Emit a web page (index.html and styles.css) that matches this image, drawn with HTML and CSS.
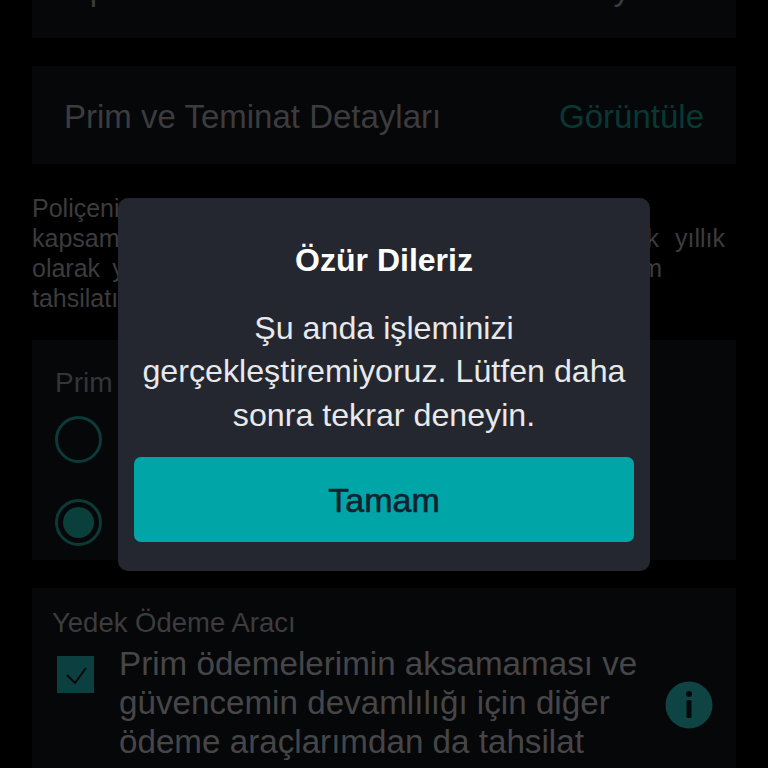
FILE: index.html
```html
<!DOCTYPE html>
<html lang="tr">
<head>
<meta charset="utf-8">
<title>Özür Dileriz</title>
<link rel="stylesheet" href="styles.css">
</head>
<body>
<main class="page">
  <section class="card card-top"><p class="top-text"><span>Ops. Teminat Tutarı</span><span>12 Ay</span></p></section>
  <section class="card card-detail">
    <span class="detail-title">Prim ve Teminat Detayları</span>
    <span class="detail-link">Görüntüle</span>
  </section>
  <p class="note">
    <span class="note-line">Poliçenizin prim ödemesi seçtiğiniz ödeme aracından</span>
    <span class="note-line note-wide">kapsamında primleri tahsil edilmekte olup toplanarak yıllık</span>
    <span class="note-line note-mid">olarak yenilenir ve ödeme planı üzerinden alınan prim</span>
    <span class="note-line">tahsilatı yapılır.</span>
  </p>
  <section class="card card-plan">
    <h2 class="plan-title">Prim Ödeme Planı</h2>
    <div class="plan-row"><span class="radio"></span><span class="plan-label">Yıllık</span></div>
    <div class="plan-row"><span class="radio radio-on"></span><span class="plan-label">Aylık</span></div>
  </section>
  <section class="card card-backup">
    <h2 class="backup-title">Yedek Ödeme Aracı</h2>
    <div class="backup-row">
      <span class="check">
        <svg viewBox="0 0 37 37" width="37" height="37" aria-hidden="true"><path d="M10 19l8 8L29 12" fill="none" stroke="#05090b" stroke-width="2"/></svg>
      </span>
      <p class="backup-text">Prim ödemelerimin aksamaması ve güvencemin devamlılığı için diğer ödeme araçlarımdan da tahsilat yapılmasını istiyorum.</p>
      <span class="info">
        <svg viewBox="0 0 48 48" width="48" height="48" aria-hidden="true"><circle cx="24" cy="24" r="23.5" fill="#0e4444"/><circle cx="24" cy="13" r="3" fill="#05090b"/><rect x="21.5" y="19" width="5" height="18" rx="1.5" fill="#05090b"/></svg>
      </span>
    </div>
  </section>
</main>
<div class="overlay">
  <div class="modal" role="dialog">
    <h1 class="modal-title">Özür Dileriz</h1>
    <p class="modal-text">Şu anda işleminizi gerçekleştiremiyoruz. Lütfen daha sonra tekrar deneyin.</p>
    <button class="modal-btn" type="button">Tamam</button>
  </div>
</div>
</body>
</html>
```
FILE: styles.css
```css
* { box-sizing: border-box; }
html, body { margin: 0; padding: 0; height: 768px; overflow: hidden; background: #000; }
body { font-family: "Liberation Sans", Arial, sans-serif; color: #3c3c3e; }
h1, h2, p { margin: 0; font-weight: 400; }
.page { display: flex; flex-direction: column; padding: 0 32px; height: 768px; overflow: hidden; }
.card { background: #060709; flex: none; }
.card-top { height: 38px; overflow: hidden; padding: 0 106px 0 32px; }
.top-text { display: flex; justify-content: space-between; font-size: 33px; line-height: 38px; margin-top: -30px; white-space: nowrap; }
.card-detail { height: 98px; margin-top: 28px; display: flex; justify-content: space-between; align-items: center; padding: 3px 32px 0; font-size: 33px; }
.detail-link { color: #083833; }
.note { margin: 29px 0 0; font-size: 25px; line-height: 30px; height: 119px; }
.note-line { display: block; white-space: nowrap; }
.note-wide { width: 693px; text-align-last: justify; white-space: normal; }
.note-mid { width: 630px; text-align-last: justify; white-space: normal; }
.card-plan { margin-top: 28px; height: 220px; padding: 27px 23px 0; }
.plan-title { font-size: 28px; line-height: 31px; color: #343537; }
.plan-row { display: flex; align-items: center; gap: 24px; height: 83px; }
.radio { width: 47px; height: 47px; border-radius: 50%; border: 3px solid #0b3a38; flex: none; display: flex; align-items: center; justify-content: center; }
.radio-on::after { content: ""; width: 31px; height: 31px; border-radius: 50%; background: #0a3f3c; }
.plan-label { font-size: 28px; }
.card-backup { margin-top: 28px; height: 180px; padding: 20px 22px 0 20px; }
.backup-title { font-size: 27.5px; line-height: 30px; }
.backup-row { display: flex; align-items: flex-start; margin-top: 6px; }
.check { width: 37px; height: 37px; margin: 12px 0 0 5px; background: #0b3f40; flex: none; }
.check svg { display: block; }
.backup-text { width: 545px; margin-left: 25px; font-size: 33.2px; line-height: 39px; color: #464648; flex: none; }
.info { margin: 37px 0 0 1px; width: 48px; height: 48px; flex: none; }
.info svg { display: block; }
.overlay { position: fixed; inset: 0; display: flex; align-items: center; justify-content: center; }
.modal { width: 532px; height: 373px; background: #24272f; border-radius: 10px; padding: 41px 16px 0; display: flex; flex-direction: column; align-items: center; }
.modal-title { font-size: 32px; font-weight: 700; line-height: 42px; color: #fff; text-align: center; }
.modal-text { margin-top: 26px; width: 500px; font-size: 32.2px; line-height: 43.5px; color: #e8e9ea; text-align: center; }
.modal-btn { margin-top: 20px; width: 500px; height: 85px; padding-top: 2px; border: 0; border-radius: 7px; background: #00a5a8; color: #11222f; font: 400 34px "Liberation Sans", Arial, sans-serif; -webkit-text-stroke: 0.6px #11222f; }
```
